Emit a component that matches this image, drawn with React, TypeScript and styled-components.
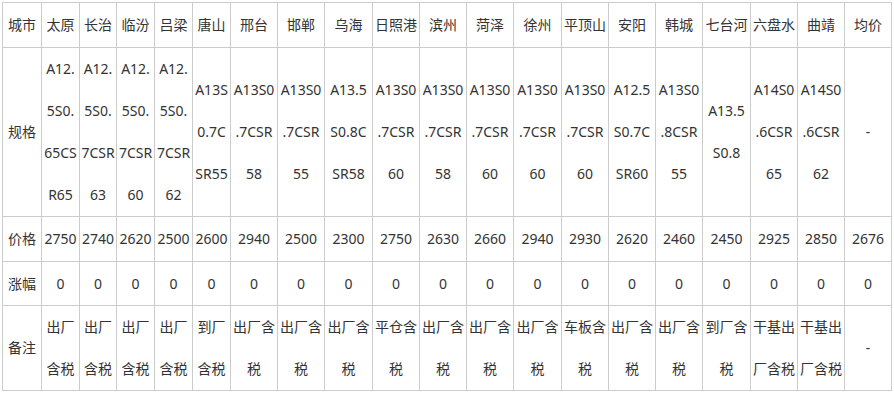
import styled, { createGlobalStyle } from "styled-components";

const GlobalStyle = createGlobalStyle`
  body {
    margin: 0;
    background: #ffffff;
  }
`;

const Page = styled.div`
  padding: 2px;
`;

const PriceTable = styled.table`
  border-collapse: collapse;
  table-layout: fixed;
  width: 890px;
  font-family: "Noto Sans", "Noto Sans CJK SC", sans-serif;
  font-size: 14px;
  color: #333333;
`;

const Row = styled.tr<{ $height: number }>`
  height: ${(p) => p.$height}px;
`;

const Cell = styled.td`
  border: 1px solid #cccccc;
  padding: 0;
  text-align: center;
  vertical-align: middle;
  line-height: 42px;
  white-space: nowrap;
  overflow: hidden;
`;

const Line = styled.span`
  display: block;
`;

type City = {
  name: string;
  width: number;
  spec: string[];
  price: string;
  change: string;
  note: string[];
};

const cities: City[] = [
  { name: "太原", width: 38, spec: ["A12.", "5S0.", "65CS", "R65"], price: "2750", change: "0", note: ["出厂", "含税"] },
  { name: "长治", width: 37, spec: ["A12.", "5S0.", "7CSR", "63"], price: "2740", change: "0", note: ["出厂", "含税"] },
  { name: "临汾", width: 38, spec: ["A12.", "5S0.", "7CSR", "60"], price: "2620", change: "0", note: ["出厂", "含税"] },
  { name: "吕梁", width: 38, spec: ["A12.", "5S0.", "7CSR", "62"], price: "2500", change: "0", note: ["出厂", "含税"] },
  { name: "唐山", width: 38, spec: ["A13S", "0.7C", "SR55"], price: "2600", change: "0", note: ["到厂", "含税"] },
  { name: "邢台", width: 47, spec: ["A13S0", ".7CSR", "58"], price: "2940", change: "0", note: ["出厂含", "税"] },
  { name: "邯郸", width: 47, spec: ["A13S0", ".7CSR", "55"], price: "2500", change: "0", note: ["出厂含", "税"] },
  { name: "乌海", width: 48, spec: ["A13.5", "S0.8C", "SR58"], price: "2300", change: "0", note: ["出厂含", "税"] },
  { name: "日照港", width: 47, spec: ["A13S0", ".7CSR", "60"], price: "2750", change: "0", note: ["平仓含", "税"] },
  { name: "滨州", width: 47, spec: ["A13S0", ".7CSR", "58"], price: "2630", change: "0", note: ["出厂含", "税"] },
  { name: "菏泽", width: 47, spec: ["A13S0", ".7CSR", "60"], price: "2660", change: "0", note: ["出厂含", "税"] },
  { name: "徐州", width: 48, spec: ["A13S0", ".7CSR", "60"], price: "2940", change: "0", note: ["出厂含", "税"] },
  { name: "平顶山", width: 47, spec: ["A13S0", ".7CSR", "60"], price: "2930", change: "0", note: ["车板含", "税"] },
  { name: "安阳", width: 47, spec: ["A12.5", "S0.7C", "SR60"], price: "2620", change: "0", note: ["出厂含", "税"] },
  { name: "韩城", width: 47, spec: ["A13S0", ".8CSR", "55"], price: "2460", change: "0", note: ["出厂含", "税"] },
  { name: "七台河", width: 48, spec: ["A13.5", "S0.8"], price: "2450", change: "0", note: ["到厂含", "税"] },
  { name: "六盘水", width: 47, spec: ["A14S0", ".6CSR", "65"], price: "2925", change: "0", note: ["干基出", "厂含税"] },
  { name: "曲靖", width: 47, spec: ["A14S0", ".6CSR", "62"], price: "2850", change: "0", note: ["干基出", "厂含税"] },
  { name: "均价", width: 47, spec: ["-"], price: "2676", change: "0", note: ["-"] },
];

const Lines = ({ lines }: { lines: string[] }) => (
  <>
    {lines.map((l, i) => (
      <Line key={i}>{l}</Line>
    ))}
  </>
);

const App = () => {
  return (
    <Page>
      <GlobalStyle />
      <PriceTable>
        <colgroup>
          <col style={{ width: 39 }} />
          {cities.map((c) => (
            <col key={c.name} style={{ width: c.width }} />
          ))}
        </colgroup>
        <tbody>
          <Row $height={45}>
            <Cell>城市</Cell>
            {cities.map((c) => (
              <Cell key={c.name}>{c.name}</Cell>
            ))}
          </Row>
          <Row $height={169}>
            <Cell>规格</Cell>
            {cities.map((c) => (
              <Cell key={c.name}>
                <Lines lines={c.spec} />
              </Cell>
            ))}
          </Row>
          <Row $height={45}>
            <Cell>价格</Cell>
            {cities.map((c) => (
              <Cell key={c.name}>{c.price}</Cell>
            ))}
          </Row>
          <Row $height={44}>
            <Cell>涨幅</Cell>
            {cities.map((c) => (
              <Cell key={c.name}>{c.change}</Cell>
            ))}
          </Row>
          <Row $height={85}>
            <Cell>备注</Cell>
            {cities.map((c) => (
              <Cell key={c.name}>
                <Lines lines={c.note} />
              </Cell>
            ))}
          </Row>
        </tbody>
      </PriceTable>
    </Page>
  );
};

export default App;
